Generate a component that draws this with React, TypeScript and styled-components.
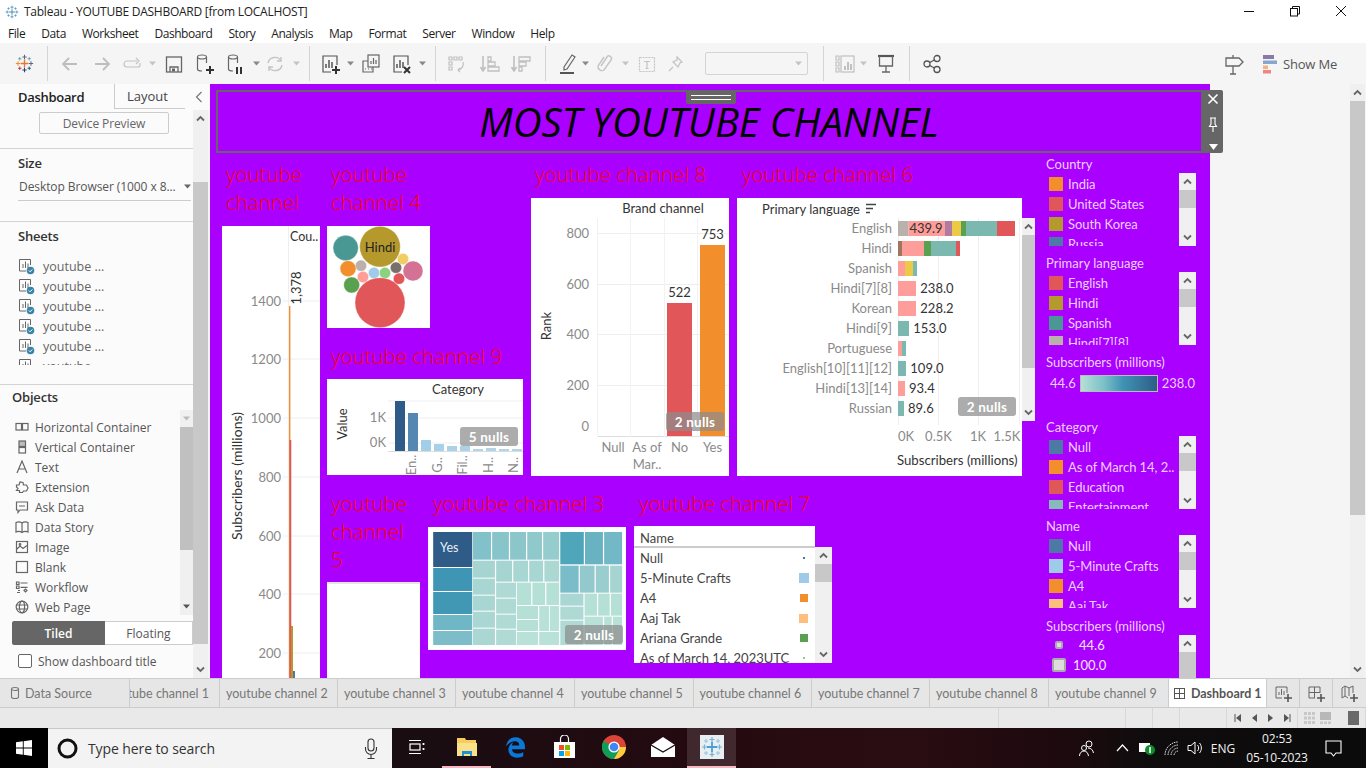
import React from 'react';
import styled, { createGlobalStyle } from 'styled-components';
import { FaEdgeLegacy } from 'react-icons/fa6';

const UI = `"Open Sans", "Noto Sans", sans-serif`;
const BOOK = `Lato, "Open Sans", sans-serif`;

const Global = createGlobalStyle`
  html, body { margin: 0; padding: 0; width: 1366px; height: 768px; overflow: hidden; background: #fff; }
  * { box-sizing: border-box; }
`;

const Page = styled.div`
  width: 1366px; height: 768px; display: flex; flex-direction: column;
  font-family: ${UI}; font-size: 12px; color: #333; overflow: hidden;
`;

/* ---------- title + menu ---------- */
const TitleBar = styled.div`
  height: 23px; background: #fff; display: flex; align-items: center; padding-left: 5px; position: relative; flex: none;
`;
const TitleText = styled.div`
  margin-left: 5px; font-size: 12px; color: #222; letter-spacing: -0.25px; white-space: nowrap;
`;
const WinButtons = styled.div`
  margin-left: auto; margin-right: 2px; display: flex; align-items: center; width: 138px; height: 23px;
`;
const WinButton = styled.div`
  width: 46px; display: flex; justify-content: center; align-items: center; position: relative; top: -1px;
`;
const MenuBar = styled.div`
  height: 20px; background: #fff; display: flex; align-items: center; gap: 16px; padding-left: 8px; flex: none;
`;
const MenuItem = styled.span`
  font-size: 12px; color: #1c1c1c; letter-spacing: -0.43px;
`;

/* ---------- toolbar ---------- */
const Toolbar = styled.div`
  height: 41px; flex: none; background: #f5f5f5; display: flex; align-items: center;
`;
const ToolSlot = styled.div<{ $ml: number; $w: number }>`
  flex: none; width: ${p => p.$w}px; margin-left: ${p => p.$ml}px; display: flex; align-items: center; justify-content: center; height: 41px;
`;
const ToolSep = styled.div`
  width: 1px; height: 35px; background: #d4d4d4;
`;
const ToolSelect = styled.div`
  width: 103px; height: 23px; border: 1px solid #d4d4d4; border-radius: 2px; background: #f5f5f5;
  display: flex; align-items: center; justify-content: flex-end; padding-right: 5px;
`;
const ShowMe = styled.span`
  font-size: 13px; color: #555; white-space: nowrap; letter-spacing: -0.2px;
`;

/* ---------- main ---------- */
const Main = styled.div`
  height: 594px; flex: none; display: flex; overflow: hidden;
`;
const Sidebar = styled.aside`
  width: 210px; flex: none; display: flex; flex-direction: column; background: #fbfbfb;
`;
const SideTabs = styled.div`
  height: 26px; flex: none; display: flex; align-items: stretch; border-bottom: 1px solid #fbfbfb;
`;
const SideTab = styled.div<{ $active?: boolean }>`
  width: ${p => (p.$active ? 114 : 71)}px; display: flex; align-items: center; font-size: 13px;
  padding-left: ${p => (p.$active ? 18 : 12)}px;
  color: ${p => (p.$active ? '#222' : '#444')}; font-weight: ${p => (p.$active ? 600 : 400)};
  border-left: ${p => (p.$active ? 'none' : '1px solid #ccc')};
  border-bottom: ${p => (p.$active ? 'none' : '1px solid #ccc')};
  letter-spacing: ${p => (p.$active ? -0.3 : 0)}px;
`;
const CollapseCell = styled.div`
  flex: 1; display: flex; align-items: center; justify-content: center; padding-left: 3px;
`;
const SideBody = styled.div`
  flex: 1; display: flex; min-height: 0;
`;
const Pane = styled.div`
  width: 193px; flex: none; display: flex; flex-direction: column; overflow: hidden;
`;
const DeviceButton = styled.div`
  width: 130px; height: 22px; margin: 2px 0 14px 39px; border: 1px solid #ccc; border-radius: 2px; flex: none;
  display: flex; align-items: center; justify-content: center; font-size: 12px; color: #666; letter-spacing: -0.1px;
`;
const Section = styled.section<{ $h: number }>`
  height: ${p => p.$h}px; flex: none; border-top: 1px solid #d4d4d4; overflow: hidden;
`;
const SideHeading = styled.div<{ $x?: number; $h?: number }>`
  font-size: 13px; font-weight: 600; color: #333; height: ${p => p.$h ?? 28}px; line-height: ${p => p.$h ?? 28}px; padding-left: ${p => p.$x ?? 18}px; letter-spacing: -0.2px;
`;
const SizeSelect = styled.div`
  margin: 0 2px 0 18px; height: 24px; border-bottom: 1px solid #ccc; display: flex; align-items: center; justify-content: space-between;
  font-size: 12px; color: #555; white-space: nowrap; padding: 0 0 5px 1px; letter-spacing: -0.08px;
`;
const SheetList = styled.div`
  height: 115px; overflow: hidden; padding-top: 6px;
`;
const SheetRow = styled.div`
  height: 20px; display: flex; align-items: center; padding-left: 18px; gap: 8px; color: #666; font-size: 12.5px;
`;
const ObjectsWrap = styled.div`
  display: flex; height: 205px; margin-top: 1px;
`;
const ObjectList = styled.div`
  width: 180px; background: #fbfbfb; padding-top: 7px;
`;
const ObjectRow = styled.div`
  height: 20px; display: flex; align-items: center; padding-left: 15px; gap: 6px; color: #555; font-size: 12px;
`;
const ObjectIcon = styled.span`
  width: 14px; display: flex; justify-content: center; flex: none;
`;
const ModeSwitch = styled.div`
  display: flex; height: 24px; margin: 6px 0 0 12px; flex: none;
`;
const ModeButton = styled.div<{ $on?: boolean }>`
  width: ${p => (p.$on ? 93 : 88)}px; display: flex; align-items: center; justify-content: center; font-size: 12px;
  background: ${p => (p.$on ? '#666' : '#fff')}; color: ${p => (p.$on ? '#fff' : '#555')}; font-weight: ${p => (p.$on ? 600 : 400)};
  border: ${p => (p.$on ? 'none' : '1px solid #ccc')}; border-left: none; border-radius: ${p => (p.$on ? '2px 0 0 2px' : 0)};
`;
const CheckRow = styled.div`
  display: flex; align-items: center; gap: 6px; margin: 7px 0 0 18px; font-size: 12px; color: #555; height: 18px;
`;
const CheckBox = styled.div`
  width: 14px; height: 14px; border: 1px solid #666; border-radius: 2px; background: #fff;
`;
const Scroll = styled.div<{ $w: number }>`
  width: ${p => p.$w}px; flex: none; display: flex; flex-direction: column; background: #f0f0f0; overflow: hidden; align-self: stretch;
`;
const ScrollArrow = styled.div`
  height: 17px; flex: none; display: flex; align-items: center; justify-content: center;
`;
const ScrollThumb = styled.div<{ $top?: number; $h: number; $c?: string }>`
  height: ${p => p.$h}px; margin-top: ${p => p.$top ?? 0}px; background: ${p => p.$c ?? '#c8c8c8'}; flex: none;
`;
const ScrollGap = styled.div`
  flex: 1 1 auto; min-height: 0;
`;
const SideEdge = styled.div`
  width: 2px; flex: none; background: #f5f5f5;
`;
const Gutter = styled.div`
  flex: 1; background: #f5f5f5; display: flex; justify-content: flex-end; padding-right: 1px;
`;

/* ---------- canvas ---------- */
const Canvas = styled.main`
  width: 1000px; flex: none; background: #aa00ff; position: relative; overflow: visible; padding-top: 6px; display: flex; flex-direction: column; z-index: 1;
  height: 594px;
`;
const TitleTile = styled.div`
  margin: 0 7px 0 6px; height: 63px; flex: none; border: 2px solid #666; position: relative; display: flex; align-items: center; justify-content: center;
  padding-right: 1px;
`;
const BigTitle = styled.h1`
  margin: 0; font-family: ${UI}; font-style: italic; font-weight: 400; font-size: 40px; letter-spacing: -0.05px; color: #000; white-space: nowrap; line-height: 1;
`;
const Grip = styled.div`
  position: absolute; top: -1px; left: 468px; width: 50px; height: 13px; background: #666; border-radius: 0 0 2px 2px;
  display: flex; flex-direction: column; align-items: center; justify-content: center; gap: 3px;
  &::before, &::after { content: ''; width: 40px; height: 1px; background: #fff; }
`;
const TileTools = styled.div`
  position: absolute; top: -2px; right: -22px; width: 20px; height: 63px; background: #666; border-radius: 0 2px 2px 0;
  display: flex; flex-direction: column; align-items: center; justify-content: space-between; padding: 3px 0 3px;
`;
const CanvasBody = styled.div`
  flex: 1; min-height: 0; display: flex; padding: 7px 0 0 12px; overflow: hidden; height: 525px;
`;
const LabelRed = styled.div<{ $pad?: number; $mt?: number }>`
  font-family: ${UI}; font-weight: 300; font-size: 20.5px; line-height: 28px; color: #ff0000; padding-left: ${p => p.$pad ?? 4}px; margin-top: ${p => p.$mt ?? 0}px; white-space: nowrap;
`;
const Tile = styled.div<{ $w: number }>`
  width: ${p => p.$w}px; flex: none; display: flex; flex-direction: column;
`;
const MidArea = styled.div`
  width: 695px; margin-left: 7px; flex: none; display: flex; flex-direction: column;
`;
const MidTop = styled.div`
  display: flex; gap: 8px; height: 316px; flex: none;
`;
const MidBottom = styled.div`
  display: flex; gap: 8px; margin-top: 13px; flex: none;
`;
const Card = styled.div<{ $w?: number; $h: number; $mt?: number; $edge?: boolean }>`
  position: relative; background: #fff; flex: none;
  width: ${p => (p.$w ? `${p.$w}px` : 'auto')}; height: ${p => p.$h}px; margin-top: ${p => p.$mt ?? 0}px;
  border-top: ${p => (p.$edge ? '2px solid #e6e6e6' : 'none')};
  & > svg { display: block; }
`;
const NullBadge = styled.div<{ $r: number; $b: number }>`
  position: absolute; right: ${p => p.$r}px; bottom: ${p => p.$b}px; width: 58px; height: 19px; border-radius: 3px;
  background: rgba(140,140,140,.72); color: #fff; font-family: ${BOOK}; font-weight: 700; font-size: 13.5px;
  display: flex; align-items: center; justify-content: center; letter-spacing: .2px;
`;
const OverScroll = styled.div<{ $t: number; $h: number; $w: number; $r: number }>`
  position: absolute; top: ${p => p.$t}px; right: ${p => p.$r}px; width: ${p => p.$w}px; height: ${p => p.$h}px; display: flex;
`;
const T = styled.text<{ $c?: string; $s?: number; $b?: number }>`
  font-family: ${BOOK}; fill: ${p => p.$c ?? '#8a8a8a'}; font-size: ${p => p.$s ?? 13}px; font-weight: ${p => p.$b ?? 400};
`;
/* table */
const TableHead = styled.div`
  height: 22px; border-bottom: 2px solid #ccc; padding-left: 6px; font-family: ${BOOK}; font-size: 13px; color: #444; display: flex; align-items: center; padding-top: 3px;
`;
const TableRow = styled.div`
  height: 20px; display: flex; align-items: center; justify-content: space-between; padding: 0 6px 0 6px; font-family: ${BOOK}; font-size: 13px; color: #444; white-space: nowrap;
`;
const TableBody = styled.div`
  height: 115px; overflow: hidden;
`;
const KeyCell = styled.div`
  width: 11px; height: 20px; display: flex; align-items: center; justify-content: center; flex: none;
`;
const KeyMark = styled.div<{ $c: string; $s: number }>`
  width: ${p => p.$s}px; height: ${p => p.$s}px; background: ${p => p.$c};
`;

/* ---------- legends ---------- */
const Legends = styled.div`
  width: 150px; margin-left: 24px; margin-top: -6px; flex: none; display: flex; flex-direction: column; font-family: ${BOOK};
`;
const LegendBlock = styled.div<{ $h: number }>`
  height: ${p => p.$h}px; flex: none;
`;
const LegendTitle = styled.div`
  height: 19px; line-height: 21px; font-size: 13px; color: #ecd0ff; white-space: nowrap;
`;
const LegendBody = styled.div<{ $h?: number }>`
  display: flex; height: ${p => p.$h ?? 73}px; overflow: hidden;
`;
const LegendItems = styled.div`
  width: 133px; overflow: hidden; flex: none;
`;
const LegendItem = styled.div`
  height: 20px; display: flex; align-items: center; gap: 5px; padding-left: 3px; font-size: 13px; color: #ecd0ff; white-space: nowrap; position: relative; top: 1px; letter-spacing: -0.05px;
`;
const Swatch = styled.span<{ $c: string }>`
  width: 14px; height: 14px; flex: none; background: ${p => p.$c};
`;
const SizeItem = styled.div<{ $pad: number; $gap: number }>`
  height: 20px; display: flex; align-items: center; gap: ${p => p.$gap}px; padding-left: ${p => p.$pad}px; font-size: 13px; color: #f4e4ff;
`;
const SizeDot = styled.span<{ $s: number }>`
  width: ${p => p.$s}px; height: ${p => p.$s}px; background: #ddd; border: 2px solid #aaa; border-radius: 2px; flex: none;
`;
const GradientRow = styled.div`
  display: flex; align-items: center; gap: 4px; padding-left: 4px; height: 26px; color: #ecd0ff; font-size: 13px; margin-top: -1px;
`;
const GradientBar = styled.div`
  width: 78px; height: 17px; border: 1px solid #bbb; background: linear-gradient(90deg, #b6e0d6 0%, #7cc0c8 30%, #3f93b4 55%, #2f5d87 100%);
`;

/* ---------- tabs + status ---------- */
const TabsBar = styled.div`
  height: 30px; flex: none; background: #e6e6e6; border-top: 1px solid #ccc; border-bottom: 1px solid #ccc; display: flex;
`;
const TabCell = styled.div<{ $w: number; $active?: boolean; $align?: 'start' | 'end' | 'mid' }>`
  width: ${p => p.$w}px; flex: none; display: flex; align-items: center; gap: 5px;
  justify-content: ${p => (p.$align === 'end' ? 'flex-end' : p.$align === 'mid' ? 'center' : 'flex-start')};
  padding: 0 ${p => (p.$align === 'end' ? 10 : 0)}px 0 ${p => (p.$align ? 0 : 6)}px;
  overflow: hidden; border-right: 1px solid #ccc; white-space: nowrap; font-family: ${BOOK};
  background: ${p => (p.$active ? '#fff' : 'transparent')}; color: ${p => (p.$active ? '#555' : '#777')};
  font-size: 12.5px; font-weight: ${p => (p.$active ? 700 : 400)};
`;
const SourceCell = styled(TabCell)`
  padding-left: 10px; font-size: 12.5px;
`;
const StatusBar = styled.div`
  height: 20px; flex: none; background: #e9e9e9; display: flex;
`;
const StatusCell = styled.div<{ $w: number; $gap?: number }>`
  width: ${p => p.$w}px; flex: none; border-right: 1px solid #d8d8d8; display: flex; align-items: center; justify-content: center; gap: ${p => p.$gap ?? 0}px;
`;

/* ---------- task bar ---------- */
const Taskbar = styled.div`
  height: 40px; flex: none; display: flex; align-items: stretch; color: #fff;
  background: linear-gradient(90deg, #151515 0, #1a0d12 440px, #240a10 700px, #2a0d13 900px, #1d0a0e 1060px, #0f0c0d 1150px, #0b0b0c 1366px);
`;
const StartCell = styled.div`
  width: 48px; background: #000; display: flex; align-items: center; justify-content: center; flex: none;
`;
const SearchBox = styled.div`
  width: 344px; background: #f3f3f3; display: flex; align-items: center; flex: none; padding-left: 9px; gap: 10px; color: #333; font-size: 14px; border-top: 1px solid #c8c8c8;
`;
const SearchText = styled.span`
  flex: 1; letter-spacing: -0.1px;
`;
const TaskSlot = styled.div<{ $w: number; $on?: boolean; $bar?: boolean }>`
  width: ${p => p.$w}px; flex: none; display: flex; align-items: center; justify-content: center; position: relative;
  background: ${p => (p.$on ? 'rgba(255,255,255,.13)' : 'transparent')};
  border-bottom: ${p => (p.$bar ? '2px solid #f7b7c0' : '2px solid transparent')};
`;
const TrayArea = styled.div`
  margin-left: auto; display: flex; align-items: center; height: 40px;
`;
const TraySlot = styled.div<{ $w: number }>`
  width: ${p => p.$w}px; flex: none; display: flex; align-items: center; justify-content: center; font-size: 12px; color: #f2f2f2;
`;
const Clock = styled.div`
  width: 76px; flex: none; display: flex; flex-direction: column; align-items: center; gap: 2px; font-size: 12px; line-height: 17px; color: #f2f2f2; letter-spacing: -0.1px;
`;

/* ---------- icons ---------- */
type IcP = { w?: number; h?: number; c?: string; sw?: number; children?: React.ReactNode };
const Ic = ({ w = 20, h = 20, c = '#666', sw = 1.2, children }: IcP) => (
  <svg width={w} height={h} viewBox={`0 0 ${w} ${h}`} fill="none" stroke={c} strokeWidth={sw}>{children}</svg>
);
const Caret = ({ c = '#888' }: { c?: string }) => (
  <svg width="7" height="5" viewBox="0 0 7 5"><path d="M0 .5h7L3.5 4.5z" fill={c} /></svg>
);
const Cross = ({ x, y, s, c, w }: { x: number; y: number; s: number; c: string; w: number }) => (
  <path d={`M${x - s} ${y}H${x + s}M${x} ${y - s}V${y + s}`} stroke={c} strokeWidth={w} fill="none" />
);
const TableauMark = ({ size = 22, tint }: { size?: number; tint?: string }) => (
  <svg width={size} height={size} viewBox="0 0 22 22">
    <Cross x={11} y={11} s={4.5} c={tint ?? '#e8762d'} w={1.6} />
    <Cross x={11} y={3.5} s={2.5} c={tint ?? '#5b6591'} w={1.2} />
    <Cross x={11} y={18.5} s={2.5} c={tint ?? '#1f447a'} w={1.2} />
    <Cross x={3.5} y={11} s={2.5} c={tint ?? '#eb912b'} w={1.2} />
    <Cross x={18.5} y={11} s={2.5} c={tint ?? '#5c6692'} w={1.2} />
    <Cross x={5.5} y={5.5} s={2} c={tint ?? '#7099a6'} w={1} />
    <Cross x={16.5} y={5.5} s={2} c={tint ?? '#7099a6'} w={1} />
    <Cross x={5.5} y={16.5} s={2} c={tint ?? '#c72035'} w={1} />
    <Cross x={16.5} y={16.5} s={2} c={tint ?? '#1f447a'} w={1} />
  </svg>
);
const ArrowLeft = ({ c }: { c: string }) => <Ic c={c} sw={1.8}><path d="M17 10H3M9 4l-6 6 6 6" /></Ic>;
const ArrowRight = ({ c }: { c: string }) => <Ic c={c} sw={1.8}><path d="M3 10h14M11 4l6 6-6 6" /></Ic>;
const RedoIcon = () => (
  <Ic w={20} c="#c4c4c4"><path d="M15 7H5a3 3 0 0 0-3 3v0a3 3 0 0 0 3 3h11a2 2 0 0 0 2-2V9M14 4l3 3-3 3" /></Ic>
);
const SaveIcon = () => (
  <Ic c="#666" sw={1.3}><rect x="2.5" y="3" width="15" height="15" /><path d="M6 18v-5h8v5" /><rect x="8" y="14.5" width="3" height="3" fill="#666" stroke="none" /></Ic>
);
const DbIcon = ({ badge }: { badge: 'plus' | 'pause' }) => (
  <Ic w={22} h={24} c="#666">
    <ellipse cx="7" cy="5" rx="4.5" ry="2" />
    <path d="M2.5 5v12c0 1 2 2 4.5 2M11.5 5v6" />
    {badge === 'plus'
      ? <path d="M15 14v8M11 18h8" stroke="#333" strokeWidth="2" />
      : <path d="M11 15v7M15 15v7" stroke="#333" strokeWidth="2" />}
  </Ic>
);
const RefreshIcon = () => (
  <Ic c="#c4c4c4" sw={1.4}><path d="M3 9a7 7 0 0 1 13-2M17 11a7 7 0 0 1-13 2" /><path d="M16 3v4h-4M4 17v-4h4" /></Ic>
);
const SheetGlyph = ({ badge }: { badge?: 'plus' | 'x' }) => (
  <Ic w={22} h={24} c="#555">
    <path d="M11 20H3V4h14v9" />
    <path d="M6 16v-4M9 16V8M12 16v-6" strokeWidth="1.5" />
    {badge === 'plus' && <path d="M16 14v8M12 18h8" stroke="#333" strokeWidth="2" />}
    {badge === 'x' && <path d="M13 15l6 6M19 15l-6 6" stroke="#333" strokeWidth="2" />}
  </Ic>
);
const DupIcon = () => (
  <Ic w={20} h={22} c="#666"><rect x="7" y="2" width="11" height="12" fill="#f5f5f5" /><path d="M10 11V8M12.5 11V5M15 11V7" /><path d="M7 8H2v11h10v-5" /><path d="M4 16h1M7 16h1M10 16h1" /></Ic>
);
const SwapIcon = () => (
  <Ic c="#c0c0c0"><path d="M3 3h3v3H3zM8 3h3v3H8zM13 3h3v3h-3zM3 8h3v3H3zM3 13h3v3H3z" /><path d="M17 8c1 4-1 7-5 8M14 14l-2 2 2 2" /></Ic>
);
const SortIcon = ({ flip }: { flip?: boolean }) => (
  <Ic w={22} c="#c0c0c0" sw={1.3}><path d="M4 2v14M1.5 13L4 17l2.500-4" strokeWidth="1.6" />
    {flip
      ? <path d="M9 3h11v4H9zM9 8h7v4H9zM9 13h3v4H9z" />
      : <path d="M9 3h3v4H9zM9 8h7v4H9zM9 13h11v4H9z" />}
  </Ic>
);
const PenIcon = () => (
  <Ic w={20} h={24} c="#666"><path d="M6 15L14 3l3 2-8 12-3 1z" /><path d="M2 21h14" strokeWidth="2" stroke="#555" /></Ic>
);
const ClipIcon = () => (
  <Ic c="#c4c4c4" sw={1.4}><path d="M6 12L12 3a2.500 2.500 0 0 1 4 3L9 16a4 4 0 0 1-6-4l6-9" /></Ic>
);
const TextBoxIcon = () => (
  <Ic c="#c4c4c4"><rect x="2.500" y="3.500" width="15" height="14" strokeDasharray="2 1" /><path d="M7 7.500h6M10 7.500v7M8.500 14.500h3" /></Ic>
);
const PinIcon = ({ c = '#c4c4c4' }: { c?: string }) => (
  <Ic c={c} sw={1.3}><path d="M11 3l5 5-2 1-2 4-5-5 4-2zM7 13l-4 4" /></Ic>
);
const PaleChart = () => (
  <Ic w={20} h={22} c="#c0c0c0"><path d="M1 3h3v4H1zM1 9h3v4H1zM1 15h3v4H1z" /><rect x="6" y="3" width="13" height="16" /><path d="M10 17v-4M13 17V9M16 17v-6" strokeWidth="2" /></Ic>
);
const PresentIcon = () => (
  <Ic w={20} h={22} c="#666" sw={1.3}><path d="M2 3h16" strokeWidth="2.200" stroke="#555" /><path d="M3.500 3v10h13V3M10 13v6M6 19h8" /></Ic>
);
const ShareIcon = () => (
  <Ic c="#555" sw={1.3}><circle cx="5" cy="10" r="3" /><circle cx="15" cy="4.500" r="3" /><circle cx="15" cy="15.500" r="3" /><path d="M7.700 8.500l4.600-2.500M7.700 11.500l4.600 2.500" /></Ic>
);
const SignIcon = () => (
  <Ic w={20} h={24} c="#666" sw={1.3}><path d="M2 6h13l4 4-4 4H2zM9 3v3M9 14v8M6 22h6" /></Ic>
);
const ShowMeIcon = () => (
  <svg width="15" height="20" viewBox="0 0 15 20">
    <rect x="0" y="1" width="11" height="4" fill="#8b7aa8" />
    <rect x="0" y="6.500" width="14" height="3.500" fill="#86a8d0" />
    <rect x="0" y="11.500" width="5" height="3.500" fill="#f6b37a" />
    <rect x="0" y="16" width="8" height="3.500" fill="#f08484" />
  </svg>
);
const Chevron = ({ up, c = '#666' }: { up?: boolean; c?: string }) => (
  <svg width="9" height="7" viewBox="0 0 9 7" fill="none" stroke={c} strokeWidth="1.800">
    <path d={up ? 'M1 5.500l3.500-3.500L8 5.500' : 'M1 1.500l3.500 3.500L8 1.500'} />
  </svg>
);
const SheetIcon = () => (
  <svg width="17" height="17" viewBox="0 0 17 17" fill="none" stroke="#666">
    <path d="M8 13H1.500V1.500h11V7" />
    <path d="M5 10V6M7.500 10V3.500M10 10V5.500" />
    <circle cx="12.500" cy="12.500" r="3.800" fill="#3a84a8" stroke="none" />
    <path d="M10.800 12.500l1.300 1.300 2.200-2.300" stroke="#fff" strokeWidth="1" />
  </svg>
);

const objIcons: React.ReactNode[] = [
  <Ic w={14} h={12} c="#666" key="h"><rect x="1" y="2.500" width="5.500" height="6.500" /><rect x="7.500" y="2.500" width="5.500" height="6.500" /></Ic>,
  <Ic w={14} h={14} c="#666" key="v"><rect x="4" y="1" width="6.500" height="5.500" fill="#bbb" /><rect x="4" y="7.500" width="6.500" height="5.500" /></Ic>,
  <Ic w={14} h={14} c="#666" key="t"><path d="M2 13L7 1l5 12M3.800 9h6.400" /></Ic>,
  <Ic w={14} h={14} c="#666" key="e"><path d="M1.500 5h2.500l1-3 3 .5.500 2.500h3l1.500 3-1.500 3h-3l-1 1.500-3 0v-2H1.500l1.500-2-1.500-1.500z" /></Ic>,
  <Ic w={14} h={14} c="#666" key="a"><path d="M1.500 2h11v8H5l-2 2.500V10H1.500zM4 6h6" /></Ic>,
  <Ic w={14} h={14} c="#666" key="d"><path d="M7 3C5 1.500 3 1.500 1 2.500v9.500c2-1 4-1 6 .5 2-1.500 4-1.500 6-.5V2.500c-2-1-4-1-6 .5zM7 3v9.500" /></Ic>,
  <Ic w={14} h={14} c="#666" key="i"><rect x="1.500" y="1.500" width="11" height="11" /><path d="M2 9l3-3 3 2.500 4-3" /><circle cx="5" cy="4.500" r=".8" /></Ic>,
  <Ic w={14} h={14} c="#666" key="b"><rect x="1.500" y="1.500" width="11" height="11" /></Ic>,
  <Ic w={14} h={14} c="#666" key="w"><path d="M1.500 2h2.500v2.500H1.500zM5.500 3h7M1.500 6h2.500v2.500H1.500zM5.500 7.300h7M3 10.500h2M9 10.500l1.500-1.500 1.500 1.500-1.500 1.500zM2 12.500h3" /></Ic>,
  <Ic w={14} h={14} c="#666" key="g"><circle cx="7" cy="7" r="5.800" /><ellipse cx="7" cy="7" rx="2.600" ry="5.800" /><path d="M1.500 5h11M1.500 9h11" /></Ic>,
];
const objects = ['Horizontal Container', 'Vertical Container', 'Text', 'Extension', 'Ask Data', 'Data Story', 'Image', 'Blank', 'Workflow', 'Web Page'];

const C = {
  blue: '#4e79a7', lblue: '#a0cbe8', orange: '#f28e2b', lorange: '#ffbe7d', green: '#59a14f', lgreen: '#8cd17d', gold: '#b6992d',
  yellow: '#f1ce63', teal: '#499894', lteal: '#86bcb6', red: '#e15759', salmon: '#ff9d9a', grey: '#79706e', lgrey: '#bab0ac',
  pink: '#d37295', lavender: '#b07aa1', brown: '#9d7660', bar: '#7ab8b0',
};

/* ---------- toolbar data ---------- */
type ToolItem = { x: number; w: number; node: React.ReactNode };
const toolItems: ToolItem[] = [
  { x: 24, w: 19, node: <TableauMark size={19} /> },
  { x: 47.5, w: 1, node: <ToolSep /> },
  { x: 70, w: 20, node: <ArrowLeft c="#bdbdbd" /> },
  { x: 102, w: 20, node: <ArrowRight c="#bdbdbd" /> },
  { x: 132, w: 20, node: <RedoIcon /> },
  { x: 152, w: 7, node: <Caret c="#c4c4c4" /> },
  { x: 174, w: 20, node: <SaveIcon /> },
  { x: 206, w: 22, node: <DbIcon badge="plus" /> },
  { x: 237, w: 22, node: <DbIcon badge="pause" /> },
  { x: 256, w: 7, node: <Caret /> },
  { x: 275, w: 20, node: <RefreshIcon /> },
  { x: 296, w: 7, node: <Caret c="#c4c4c4" /> },
  { x: 309, w: 1, node: <ToolSep /> },
  { x: 331, w: 22, node: <SheetGlyph badge="plus" /> },
  { x: 350, w: 7, node: <Caret /> },
  { x: 371, w: 20, node: <DupIcon /> },
  { x: 402, w: 22, node: <SheetGlyph badge="x" /> },
  { x: 422, w: 7, node: <Caret /> },
  { x: 435.5, w: 1, node: <ToolSep /> },
  { x: 456, w: 20, node: <SwapIcon /> },
  { x: 490, w: 22, node: <SortIcon /> },
  { x: 521, w: 22, node: <SortIcon flip /> },
  { x: 545, w: 1, node: <ToolSep /> },
  { x: 568, w: 20, node: <PenIcon /> },
  { x: 585, w: 7, node: <Caret /> },
  { x: 604.5, w: 20, node: <ClipIcon /> },
  { x: 625, w: 7, node: <Caret c="#c4c4c4" /> },
  { x: 647, w: 20, node: <TextBoxIcon /> },
  { x: 676, w: 20, node: <PinIcon /> },
  { x: 756, w: 103, node: <ToolSelect><Caret c="#c4c4c4" /></ToolSelect> },
  { x: 823, w: 1, node: <ToolSep /> },
  { x: 845, w: 20, node: <PaleChart /> },
  { x: 863, w: 7, node: <Caret c="#c4c4c4" /> },
  { x: 885.5, w: 20, node: <PresentIcon /> },
  { x: 909.5, w: 1, node: <ToolSep /> },
  { x: 932, w: 20, node: <ShareIcon /> },
  { x: 1234, w: 20, node: <SignIcon /> },
  { x: 1270, w: 15, node: <ShowMeIcon /> },
  { x: 1310, w: 54, node: <ShowMe>Show Me</ShowMe> },
];

const Tools = () => {
  let right = 0;
  return (
    <Toolbar>
      {toolItems.map((t, i) => {
        const left = t.x - t.w / 2;
        const ml = left - right;
        right = left + t.w;
        return <ToolSlot key={i} $w={t.w} $ml={ml}>{t.node}</ToolSlot>;
      })}
    </Toolbar>
  );
};

/* ---------- charts ---------- */
const ChartA = () => (
  <svg width="98" height="452" viewBox="222 226 98 452">
    {[301, 359, 418, 477, 536, 594, 653].map(y => <path key={y} d={`M283 ${y}H320`} stroke="#eee" />)}
    <path d="M288.500 226V678" stroke="#eee" />
    {[[1400, 301], [1200, 359], [1000, 418], [800, 477], [600, 536], [400, 594], [200, 653]].map(([v, y]) => (
      <T key={v} x={281} y={y + 5} textAnchor="end">{v}</T>
    ))}
    <T x={290} y={241} $c="#333" $s={12.5}>Cou..</T>
    <T x={301} y={288} textAnchor="middle" $c="#333" transform="rotate(-90 301 288)">1,378</T>
    <T x={242} y={476} textAnchor="middle" $c="#333" $s={14} transform="rotate(-90 242 476)">Subscribers (millions)</T>
    <rect x="289" y="306" width="1.400" height="372" fill="#f28e2b" />
    <rect x="289.500" y="440" width="1.800" height="238" fill="#e15759" />
    <rect x="291" y="626" width="2" height="52" fill="#b6992d" />
    <rect x="293" y="671" width="2" height="7" fill="#4e79a7" />
  </svg>
);

const bubbles: [number, number, number, string][] = [
  [392, 264, 38, C.teal], [495, 260, 61, C.gold], [564, 297, 17, C.yellow], [594, 333, 30, C.pink],
  [543, 323, 17, C.grey], [552, 356, 17, C.red], [510, 339, 17, C.lgreen], [477, 339, 17, C.lblue],
  [444, 351, 17, C.salmon], [438, 317, 17, C.lgrey], [399, 326, 24, C.orange], [410, 375, 24, C.green], [495, 428, 75, C.red],
];
const BubbleChart = () => (
  <svg width="103" height="102" viewBox="0 0 103 102">
    {bubbles.map(([x, y, r, c], i) => (
      <circle key={i} cx={(x - 336) / 3} cy={(y - 198) / 3} r={r / 3} fill={c} stroke="#fff" strokeOpacity=".5" strokeWidth=".7" />
    ))}
    <T x={53} y={26} textAnchor="middle" $c="#222">Hindi</T>
  </svg>
);

const catBars: [number, number, string][] = [
  [395, 401, '#2e5b88'], [408, 413, '#5487b1'], [421, 440, '#a3cee8'], [434, 444, '#a7d0e9'], [447, 446, '#aad2e9'],
  [460, 446, '#aad2e9'], [473, 449, '#b0d5ea'], [486, 448, '#b0d5ea'], [499, 449, '#b0d5ea'], [512, 449, '#b0d5ea'],
];
const CategoryChart = () => (
  <svg width="196" height="96" viewBox="327 379 196 96">
    <T x={458} y={394} textAnchor="middle" $c="#333">Category</T>
    {[401, 418, 443].map(y => <path key={y} d={`M388 ${y}H523`} stroke="#eee" />)}
    <path d="M388 451.500H523" stroke="#ddd" />
    <T x={386} y={422} textAnchor="end">1K</T>
    <T x={386} y={447} textAnchor="end">0K</T>
    <T x={347} y={424} textAnchor="middle" $c="#333" transform="rotate(-90 347 424)">Value</T>
    {catBars.map(([x, y, c]) => <rect key={x} x={x} y={y} width="10" height={451 - y} fill={c} />)}
    {[['En..', 413], ['G..', 439], ['Fil..', 464], ['H..', 490], ['N..', 515]].map(([s, x]) => (
      <T key={s as string} x={(x as number) + 3} y={465} textAnchor="middle" transform={`rotate(-90 ${(x as number) + 3} 465)`}>{s}</T>
    ))}
  </svg>
);

const BrandChart = () => (
  <svg width="198" height="278" viewBox="531 198 198 278">
    <T x={663} y={213} textAnchor="middle" $c="#333">Brand channel</T>
    {[233, 284, 334, 385, 436].map(y => <path key={y} d={`M597 ${y + 0.5}H729`} stroke={y === 436 ? '#ddd' : '#eee'} />)}
    <path d="M597.500 218V437M630.500 218V437M664.500 218V437M697.500 218V437" stroke="#f2f2f2" />
    {[[800, 234], [600, 285], [400, 335], [200, 386], [0, 427]].map(([v, y]) => (
      <T key={v} x={589} y={y + 4} textAnchor="end">{v}</T>
    ))}
    <T x={551} y={326} textAnchor="middle" $c="#333" transform="rotate(-90 551 326)">Rank</T>
    <rect x="667" y="303" width="25" height="133" fill={C.red} />
    <rect x="700" y="245" width="25" height="191" fill={C.orange} />
    <T x={679.500} y={297} textAnchor="middle" $c="#333">522</T>
    <T x={712.500} y={239} textAnchor="middle" $c="#333">753</T>
    <T x={613} y={452} textAnchor="middle">Null</T>
    <T x={647} y={452} textAnchor="middle">As of</T>
    <T x={647} y={469} textAnchor="middle">Mar..</T>
    <T x={679.500} y={452} textAnchor="middle">No</T>
    <T x={712.500} y={452} textAnchor="middle">Yes</T>
  </svg>
);

type Seg = [number, string];
const langRows: { name: string; segs: Seg[]; val?: string; vx?: number }[] = [
  { name: 'English', segs: [[1151, C.lgrey], [1260, C.salmon], [1281, C.lavender], [1308, '#edc948'], [1323, C.green], [1416, C.bar], [1470, C.red]] },
  { name: 'Hindi', segs: [[1131, C.brown], [1197, C.salmon], [1218, C.green], [1293, C.bar], [1305, C.red]] },
  { name: 'Spanish', segs: [[1140, C.salmon], [1164, '#edc948'], [1176, C.bar]] },
  { name: 'Hindi[7][8]', segs: [[1173, C.salmon]], val: '238.0', vx: 1186 },
  { name: 'Korean', segs: [[1173, C.salmon]], val: '228.2', vx: 1186 },
  { name: 'Hindi[9]', segs: [[1152, C.bar]], val: '153.0', vx: 1165 },
  { name: 'Portuguese', segs: [[1131, C.salmon], [1143, C.bar]] },
  { name: 'English[10][11][12]', segs: [[1143, C.bar]], val: '109.0', vx: 1156 },
  { name: 'Hindi[13][14]', segs: [[1140, C.salmon]], val: '93.4', vx: 1152 },
  { name: 'Russian', segs: [[1137, C.bar]], val: '89.6', vx: 1149 },
];
const zx = (v: number) => 525 + v / 3;
const LanguageChart = () => (
  <svg width="285" height="278" viewBox="737 198 285 278">
    <T x={762} y={214} $c="#333">Primary language</T>
    <path d="M866 204.500h10M866 208.500h7M866 212.500h4" stroke="#444" strokeWidth="1.500" />
    <path d="M898.500 218V425M938.500 218V425M978.500 218V425M1019.500 218V425" stroke="#eee" />
    {langRows.map((r, i) => {
      const cy = 229 + i * 20;
      let x = 1119;
      return (
        <g key={r.name}>
          <T x={892} y={cy + 4} textAnchor="end">{r.name}</T>
          {r.segs.map(([end, c]) => {
            const s = <rect key={end} x={zx(x)} y={cy - 8} width={(end - x) / 3} height="15" fill={c} />;
            x = end;
            return s;
          })}
          {r.val && <T x={zx(r.vx as number)} y={cy + 4} $c="#333">{r.val}</T>}
        </g>
      );
    })}
    <T x={926} y={233} textAnchor="middle" $c="#333">439.9</T>
    <T x={906} y={441} textAnchor="middle">0K</T>
    <T x={938.500} y={441} textAnchor="middle">0.5K</T>
    <T x={978} y={441} textAnchor="middle">1K</T>
    <T x={1007} y={441} textAnchor="middle">1.5K</T>
    <T x={897} y={465} $c="#333" $s={13.200}>Subscribers (millions)</T>
  </svg>
);

type Cell = [number, number, number, number, string];
const L = '#b5e0d6';
const treeCells: Cell[] = [
  [547, 141, 645, 246, '#2e5b88'], [547, 249, 645, 318, '#3f96b4'], [547, 321, 645, 387, '#4198b5'], [547, 390, 645, 435, '#6fb7c5'], [547, 438, 645, 480, '#7cbdc9'],
  [647, 141, 692, 224, '#80c1ca'], [695, 141, 737, 224, '#88c5cb'], [740, 141, 780, 224, '#8bc6cb'], [783, 141, 820, 224, '#90c9cc'], [823, 141, 863, 224, '#95cccd'],
  [647, 227, 702, 278, '#a6d5d1'], [647, 281, 702, 329, '#a8d6d2'], [647, 332, 702, 377, '#a8d6d2'], [647, 380, 702, 428, '#aad7d3'], [647, 431, 702, 480, '#aad7d3'],
  [705, 227, 745, 290, '#a6d5d1'], [748, 227, 785, 290, '#a8d6d2'], [788, 227, 823, 290, '#a8d6d2'], [826, 227, 863, 290, '#abd8d3'],
  [705, 293, 755, 338, '#aed9d4'], [705, 341, 755, 386, '#aed9d4'], [705, 389, 755, 431, '#b0dad5'], [705, 434, 755, 480, '#b0dad5'],
  [757, 293, 793, 360, L], [796, 293, 828, 360, L], [831, 293, 863, 360, L],
  [757, 363, 810, 402, L], [757, 405, 810, 438, L], [757, 441, 810, 480, '#b8e2d8'],
  [813, 363, 838, 438, '#b8e2d8'], [840, 363, 863, 438, '#b8e2d8'], [813, 441, 863, 480, '#b8e2d8'],
  [866, 141, 925, 238, '#4fa5ba'], [928, 141, 973, 238, '#69b2c2'], [976, 141, 1021, 238, '#73b8c6'],
  [866, 242, 912, 323, '#7abcc8'], [915, 242, 952, 323, '#93c9cc'], [955, 242, 988, 323, '#9acdce'], [991, 242, 1021, 323, '#a6d5d1'],
  [866, 326, 924, 362, '#aad7d3'], [866, 365, 924, 404, '#aed9d4'], [866, 407, 924, 480, '#b0dad5'],
  [927, 326, 958, 392, L], [961, 326, 990, 392, L], [993, 326, 1021, 392, L],
  [927, 395, 973, 480, '#b8e2d8'], [976, 395, 995, 480, '#b8e2d8'], [998, 395, 1021, 480, '#b8e2d8'],
];
const Treemap = () => (
  <svg width="198" height="123" viewBox="0 0 198 123">
    <g transform="translate(-212.800 -42) scale(0.3985 0.3333)">
      {treeCells.map(([a, b, c, d, f], i) => <rect key={i} x={a} y={b} width={c - a} height={d - b} fill={f} />)}
    </g>
    <T x={12} y={25} $c="#e8f0f4" $s={12.500}>Yes</T>
  </svg>
);

const tableRows: [string, string, number][] = [
  ['Null', C.blue, 2], ['5-Minute Crafts', C.lblue, 10], ['A4', C.orange, 8], ['Aaj Tak', C.lorange, 9], ['Ariana Grande', C.green, 8], ['As of March 14, 2023UTC', C.lgreen, 2],
];

const Scrollbar = ({ w, top = 0, h, c, hideDown }: { w: number; top?: number; h: number; c?: string; hideDown?: boolean }) => (
  <Scroll $w={w}>
    <ScrollArrow><Chevron up /></ScrollArrow>
    <ScrollThumb $top={top} $h={h} $c={c} />
    <ScrollGap />
    {!hideDown && <ScrollArrow><Chevron /></ScrollArrow>}
  </Scroll>
);

const Legend = ({ title, items, h = 99 }: { title: string; items: [string, string][]; h?: number }) => (
  <LegendBlock $h={h}>
    <LegendTitle>{title}</LegendTitle>
    <LegendBody>
      <LegendItems>
        {items.map(([n, c]) => <LegendItem key={n}><Swatch $c={c} />{n}</LegendItem>)}
      </LegendItems>
      <Scrollbar w={17} h={18} />
    </LegendBody>
  </LegendBlock>
);

const tabs = [
  ['youtube channel 2', 118], ['youtube channel 3', 118], ['youtube channel 4', 119], ['youtube channel 5', 118.5],
  ['youtube channel 6', 118.5], ['youtube channel 7', 118], ['youtube channel 8', 119], ['youtube channel 9', 119.5],
] as [string, number][];

const menu = ['File', 'Data', 'Worksheet', 'Dashboard', 'Story', 'Analysis', 'Map', 'Format', 'Server', 'Window', 'Help'];

export default function App() {
  return (
    <Page>
      <Global />
      <TitleBar>
        <TableauMark size={14} tint="#4b8fb5" />
        <TitleText>Tableau - YOUTUBE DASHBOARD [from LOCALHOST]</TitleText>
        <WinButtons>
          <WinButton><Ic w={12} h={12} c="#111" sw={1}><path d="M1 6.500h10" /></Ic></WinButton>
          <WinButton><Ic w={12} h={12} c="#111" sw={1}><rect x="1.500" y="3.500" width="7" height="7.500" fill="#fff" /><path d="M3.500 3.500V1.500h7v7.500H8.500" /></Ic></WinButton>
          <WinButton><Ic w={12} h={12} c="#111" sw={1}><path d="M1 1l10 10M11 1L1 11" /></Ic></WinButton>
        </WinButtons>
      </TitleBar>
      <MenuBar>{menu.map(m => <MenuItem key={m}>{m}</MenuItem>)}</MenuBar>
      <Tools />
      <Main>
        <Sidebar>
          <SideTabs>
            <SideTab $active>Dashboard</SideTab>
            <SideTab>Layout</SideTab>
            <CollapseCell>
              <Ic w={8} h={12} c="#777" sw={1.200}><path d="M6.500 1L1.500 6l5 5" /></Ic>
            </CollapseCell>
          </SideTabs>
          <SideBody>
            <Pane>
              <DeviceButton>Device Preview</DeviceButton>
              <Section $h={73}>
                <SideHeading>Size</SideHeading>
                <SizeSelect>Desktop Browser (1000 x 8...<Caret c="#666" /></SizeSelect>
              </Section>
              <Section $h={163}>
                <SideHeading>Sheets</SideHeading>
                <SheetList>
                  {[0, 1, 2, 3, 4, 5].map(i => <SheetRow key={i}><SheetIcon />youtube ...</SheetRow>)}
                </SheetList>
              </Section>
              <Section $h={294}>
                <SideHeading $x={12} $h={24}>Objects</SideHeading>
                <ObjectsWrap>
                  <ObjectList>
                    {objects.map((o, i) => <ObjectRow key={o}><ObjectIcon>{objIcons[i]}</ObjectIcon>{o}</ObjectRow>)}
                  </ObjectList>
                  <Scroll $w={13}>
                    <ScrollArrow><Caret c="#bbb" /></ScrollArrow>
                    <ScrollThumb $h={123} $c="#c0c0c0" />
                    <ScrollGap />
                    <ScrollArrow><Caret c="#555" /></ScrollArrow>
                  </Scroll>
                </ObjectsWrap>
                <ModeSwitch>
                  <ModeButton $on>Tiled</ModeButton>
                  <ModeButton>Floating</ModeButton>
                </ModeSwitch>
                <CheckRow><CheckBox />Show dashboard title</CheckRow>
              </Section>
            </Pane>
            <Scrollbar w={15} top={55} h={462} />
            <SideEdge />
          </SideBody>
        </Sidebar>

        <Canvas>
          <TitleTile>
            <BigTitle>MOST YOUTUBE CHANNEL</BigTitle>
            <Grip />
            <TileTools>
              <Ic w={12} h={12} c="#fff" sw={1.600}><path d="M1.500 1.500l9 9M10.500 1.500l-9 9" /></Ic>
              <Ic w={12} h={15} c="#fff" sw={1.100}><path d="M3 1h6M4 1v6L2.500 9.500h7L8 7V1M6 9.500V15" /></Ic>
              <svg width="9" height="6" viewBox="0 0 9 6"><path d="M0 0h9L4.500 6z" fill="#fff" /></svg>
            </TileTools>
          </TitleTile>
          <CanvasBody>
            <Tile $w={98}>
              <LabelRed>youtube<br />channel</LabelRed>
              <Card $w={98} $h={452} $mt={10}><ChartA /></Card>
            </Tile>
            <MidArea>
              <MidTop>
                <Tile $w={196}>
                  <LabelRed>youtube<br />channel 4</LabelRed>
                  <Card $w={103} $h={102} $mt={10}><BubbleChart /></Card>
                  <LabelRed $mt={14}>youtube channel 9</LabelRed>
                  <Card $w={196} $h={96} $mt={9}>
                    <CategoryChart />
                    <NullBadge $r={5} $b={29}>5 nulls</NullBadge>
                  </Card>
                </Tile>
                <Tile $w={198}>
                  <LabelRed>youtube channel 8</LabelRed>
                  <Card $w={198} $h={278} $mt={10}>
                    <BrandChart />
                    <NullBadge $r={5} $b={45}>2 nulls</NullBadge>
                  </Card>
                </Tile>
                <Tile $w={285}>
                  <LabelRed $pad={5}>youtube channel 6</LabelRed>
                  <Card $w={285} $h={278} $mt={10}>
                    <LanguageChart />
                    <NullBadge $r={6} $b={60}>2 nulls</NullBadge>
                    <OverScroll $t={20} $h={203} $w={13} $r={-13}><Scrollbar w={13} h={133} /></OverScroll>
                  </Card>
                </Tile>
              </MidTop>
              <MidBottom>
                <Tile $w={93}>
                  <LabelRed>youtube<br />channel<br />5</LabelRed>
                  <Card $w={93} $h={96} $mt={9} $edge />
                </Tile>
                <Tile $w={198}>
                  <LabelRed $pad={5}>youtube channel 3</LabelRed>
                  <Card $w={198} $h={123} $mt={10}>
                    <Treemap />
                    <NullBadge $r={3} $b={6}>2 nulls</NullBadge>
                  </Card>
                </Tile>
                <Tile $w={181}>
                  <LabelRed $pad={5}>youtube channel 7</LabelRed>
                  <Card $w={181} $h={137} $mt={9}>
                    <TableHead>Name</TableHead>
                    <TableBody>
                      {tableRows.map(([n, c, s]) => (
                        <TableRow key={n}>{n}<KeyCell><KeyMark $c={c} $s={s} /></KeyCell></TableRow>
                      ))}
                    </TableBody>
                    <OverScroll $t={21} $h={116} $w={17} $r={-17}><Scrollbar w={17} h={18} /></OverScroll>
                  </Card>
                </Tile>
              </MidBottom>
            </MidArea>
            <Legends>
              <Legend title="Country" items={[['India', C.orange], ['United States', C.red], ['South Korea', C.gold], ['Russia', C.blue]]} />
              <Legend title="Primary language" items={[['English', C.red], ['Hindi', C.gold], ['Spanish', C.teal], ['Hindi[7][8]', C.lgrey]]} />
              <LegendBlock $h={65}>
                <LegendTitle>Subscribers (millions)</LegendTitle>
                <GradientRow>44.6<GradientBar />238.0</GradientRow>
              </LegendBlock>
              <Legend title="Category" items={[['Null', C.blue], ['As of March 14, 2..', C.orange], ['Education', C.red], ['Entertainment', C.lteal]]} />
              <Legend h={100} title="Name" items={[['Null', C.blue], ['5-Minute Crafts', C.lblue], ['A4', C.orange], ['Aaj Tak', C.lorange]]} />
              <LegendBlock $h={60}>
                <LegendTitle>Subscribers (millions)</LegendTitle>
                <LegendBody $h={50}>
                  <LegendItems>
                    <SizeItem $pad={9} $gap={16}><SizeDot $s={8} />44.6</SizeItem>
                    <SizeItem $pad={6} $gap={7}><SizeDot $s={14} />100.0</SizeItem>
                  </LegendItems>
                  <Scrollbar w={17} h={30} hideDown />
                </LegendBody>
              </LegendBlock>
            </Legends>
          </CanvasBody>
        </Canvas>

        <Gutter>
          <Scrollbar w={15} h={414} />
        </Gutter>
      </Main>

      <TabsBar>
        <SourceCell $w={130}>
          <Ic w={10} h={14} c="#777" sw={1.100}><ellipse cx="5" cy="3" rx="3.500" ry="1.500" /><path d="M1.500 3v8c0 .8 1.500 1.500 3.500 1.500s3.500-.7 3.500-1.500V3" /></Ic>
          Data Source
        </SourceCell>
        <TabCell $w={90} $align="end">tube channel 1</TabCell>
        {tabs.map(([t, w]) => <TabCell key={t} $w={w}>{t}</TabCell>)}
        <TabCell $w={98.500} $active $align="mid">
          <Ic w={13} h={13} c="#555" sw={1}><rect x="1.500" y="1.500" width="10" height="10" /><path d="M6.500 1.500v10M1.500 6.500h10" /></Ic>
          Dashboard 1
        </TabCell>
        <TabCell $w={33} $align="mid"><Ic w={20} h={20} c="#666" sw={1}><path d="M9 15H3V4h11v6M6 12V9M8.500 12V6M11 12V8" /><path d="M15 11v8M11 15h8" stroke="#555" strokeWidth="1.600" /></Ic></TabCell>
        <TabCell $w={33} $align="mid"><Ic w={20} h={20} c="#666" sw={1}><path d="M9 15H3V4h11v6M8.500 4v11M3 9.500h11" /><path d="M15 11v8M11 15h8" stroke="#555" strokeWidth="1.600" /></Ic></TabCell>
        <TabCell $w={33.500} $align="mid"><Ic w={20} h={20} c="#666" sw={1}><path d="M9 15l-3-2-3 2V5l3-2 4 2 4-2v7M6 3v10M10 5v8" /><path d="M15 11v8M11 15h8" stroke="#555" strokeWidth="1.600" /></Ic></TabCell>
      </TabsBar>
      <StatusBar>
        <StatusCell $w={999} />
        <StatusCell $w={127} />
        <StatusCell $w={27} />
        <StatusCell $w={27} />
        <StatusCell $w={47} />
        <StatusCell $w={71} $gap={9}>
          <Ic w={8} h={10} c="#555" sw={1}><path d="M1 1v8" /><path d="M7 1v8L2 5z" fill="#555" stroke="none" /></Ic>
          <Ic w={7} h={10} c="#555"><path d="M6 1v8L1 5z" fill="#555" stroke="none" /></Ic>
          <Ic w={7} h={10} c="#555"><path d="M1 1v8l5-4z" fill="#555" stroke="none" /></Ic>
          <Ic w={8} h={10} c="#555" sw={1}><path d="M7 1v8" /><path d="M1 1v8l5-4z" fill="#555" stroke="none" /></Ic>
        </StatusCell>
        <StatusCell $w={68} $gap={5}>
          <svg width="11" height="14" viewBox="0 0 11 14"><path d="M0 1h3v3H0zM4 1h3v3H4zM8 1h3v3H8zM0 5.500h3v3H0zM4 5.500h3v3H4zM8 5.500h3v3H8zM0 10h3v3H0zM4 10h3v3H4zM8 10h3v3H8z" fill="#c8c8c8" /></svg>
          <svg width="11" height="14" viewBox="0 0 11 14"><path d="M0 1h11v8H0z" fill="#b8b8b8" /><path d="M0 10.500h3v2.500H0zM4 10.500h3v2.500H4zM8 10.500h3v2.500H8z" fill="#c8c8c8" /></svg>
          <svg width="11" height="14" viewBox="0 0 11 14" style={{ marginLeft: 12 }}><path d="M0 0h11v14H0z" fill="#6a6a6a" /></svg>
        </StatusCell>
      </StatusBar>
      <Taskbar>
        <StartCell>
          <svg width="16" height="16" viewBox="0 0 16 16"><path d="M0 2.300l6.800-1v6.200H0zM7.700 1.200L16 0v7.500H7.700zM0 8.400h6.800v6.300L0 13.700zM7.700 8.400H16V16l-8.300-1.200z" fill="#fff" /></svg>
        </StartCell>
        <SearchBox>
          <svg width="21" height="21" viewBox="0 0 21 21"><circle cx="10.500" cy="10.500" r="8.500" fill="none" stroke="#111" strokeWidth="3" /></svg>
          <SearchText>Type here to search</SearchText>
          <svg width="14" height="22" viewBox="0 0 14 22" fill="none" stroke="#333" strokeWidth="1.100" style={{ marginRight: 14 }}>
            <rect x="4" y="1" width="6" height="12" rx="3" /><path d="M1.500 9v2a5.500 5.500 0 0 0 11 0V9M7 16.500V20M3.500 20.500h7" />
          </svg>
        </SearchBox>
        <TaskSlot $w={50}>
          <svg width="16" height="18" viewBox="0 0 16 18" fill="none" stroke="#fff" strokeWidth="1.200"><path d="M0 2.500h12M0 15.500h12" /><rect x="1" y="6" width="10" height="6" /><path d="M14.500 5v2M14.500 10v2" strokeWidth="1.800" /></svg>
        </TaskSlot>
        <TaskSlot $w={49} $bar>
          <svg width="22" height="22" viewBox="0 0 22 22"><path d="M1 2h8l1 2h10v16H1z" fill="#f6cd5c" /><path d="M1 7h20v13H1z" fill="#fbe08a" /><path d="M6 15h10v5h-2v-2H8v2H6z" fill="#1f8fd8" /></svg>
        </TaskSlot>
        <TaskSlot $w={49}><FaEdgeLegacy size={21} color="#0a78d7" /></TaskSlot>
        <TaskSlot $w={49}>
          <svg width="23" height="24" viewBox="0 0 23 24"><path d="M1 7h21v16H1z" fill="#fff" /><path d="M7.500 7V4a4 4 0 0 1 8 0v3" fill="none" stroke="#fff" strokeWidth="1.200" /><rect x="6" y="10" width="5" height="5" fill="#f25022" /><rect x="12" y="10" width="5" height="5" fill="#7fba00" /><rect x="6" y="16" width="5" height="5" fill="#00a4ef" /><rect x="12" y="16" width="5" height="5" fill="#ffb900" /></svg>
        </TaskSlot>
        <TaskSlot $w={50}>
          <svg width="24" height="24" viewBox="0 0 24 24">
            <circle cx="12" cy="12" r="12" fill="#db4437" />
            <path d="M12 12L1.600 6A12 12 0 0 0 12 24l5.200-9z" fill="#0f9d58" />
            <path d="M12 12h12A12 12 0 0 1 12 24l5.200-9z" fill="#ffcd40" />
            <circle cx="12" cy="12" r="5.600" fill="#fff" /><circle cx="12" cy="12" r="4.300" fill="#4285f4" />
          </svg>
        </TaskSlot>
        <TaskSlot $w={48}>
          <svg width="24" height="20" viewBox="0 0 24 20"><path d="M0 8L12 0l12 8v12H0z" fill="#fff" /><path d="M0 8l12 7 12-7" fill="none" stroke="#1a1014" strokeWidth="1.400" /></svg>
        </TaskSlot>
        <TaskSlot $w={49} $on $bar>
          <svg width="24" height="24" viewBox="0 0 24 24">
            <rect width="24" height="24" fill="#e8eef2" />
            <Cross x={12} y={12} s={5} c="#4b9fd1" w={1.800} />
            <Cross x={12} y={4.500} s={2.500} c="#6fb3d8" w={1.200} />
            <Cross x={12} y={19.500} s={2.500} c="#6fb3d8" w={1.200} />
            <Cross x={4.500} y={12} s={2.500} c="#6fb3d8" w={1.200} />
            <Cross x={19.500} y={12} s={2.500} c="#6fb3d8" w={1.200} />
            <Cross x={6} y={6} s={2} c="#8fc4e0" w={1} />
            <Cross x={18} y={6} s={2} c="#8fc4e0" w={1} />
            <Cross x={6} y={18} s={2} c="#8fc4e0" w={1} />
            <Cross x={18} y={18} s={2} c="#8fc4e0" w={1} />
          </svg>
        </TaskSlot>
        <TrayArea>
          <TraySlot $w={46}><svg width="18" height="18" viewBox="0 0 18 18" fill="none" stroke="#fff" strokeWidth="1"><circle cx="11" cy="5" r="3" /><circle cx="6" cy="9" r="2.500" /><path d="M1.500 17c0-3 2-5 4.500-5s4 2 4.500 5M10 9c3 0 5 2 5.500 5" /></svg></TraySlot>
          <TraySlot $w={24}><svg width="13" height="8" viewBox="0 0 13 8" fill="none" stroke="#fff" strokeWidth="1.200"><path d="M1 7l5.500-6L12 7" /></svg></TraySlot>
          <TraySlot $w={25}><svg width="16" height="16" viewBox="0 0 16 16"><rect x="0" y="3" width="11" height="9" fill="#fff" /><circle cx="11" cy="10" r="5" fill="#0f8a2f" /><path d="M11 7v6" stroke="#fff" strokeWidth="1.500" /></svg></TraySlot>
          <TraySlot $w={24}><svg width="15" height="15" viewBox="0 0 15 15" fill="none" stroke="#ddd" strokeWidth="1"><path d="M1 14c0-7 6-13 13-13M4 14c0-5 5-10 10-10M7 14c0-3.500 3.500-7 7-7M10 14c0-2 2-4 4-4" strokeDasharray="1.500 .8" /></svg></TraySlot>
          <TraySlot $w={24}><svg width="16" height="16" viewBox="0 0 16 16" fill="none" stroke="#fff" strokeWidth="1"><path d="M1 5.500h3L8 2v12L4 10.500H1zM10.500 5c1.500 1.500 1.500 4.500 0 6M12.500 3c2.500 3 2.500 7 0 10" /></svg></TraySlot>
          <TraySlot $w={32}>ENG</TraySlot>
          <Clock><span>02:53</span><span>05-10-2023</span></Clock>
          <TraySlot $w={5} />
          <TraySlot $w={26}><svg width="17" height="17" viewBox="0 0 17 17" fill="none" stroke="#fff" strokeWidth="1.100"><path d="M1 1h15v12h-5l-2.500 3L6 13H1z" /></svg></TraySlot>
          <TraySlot $w={20} />
        </TrayArea>
      </Taskbar>
    </Page>
  );
}
